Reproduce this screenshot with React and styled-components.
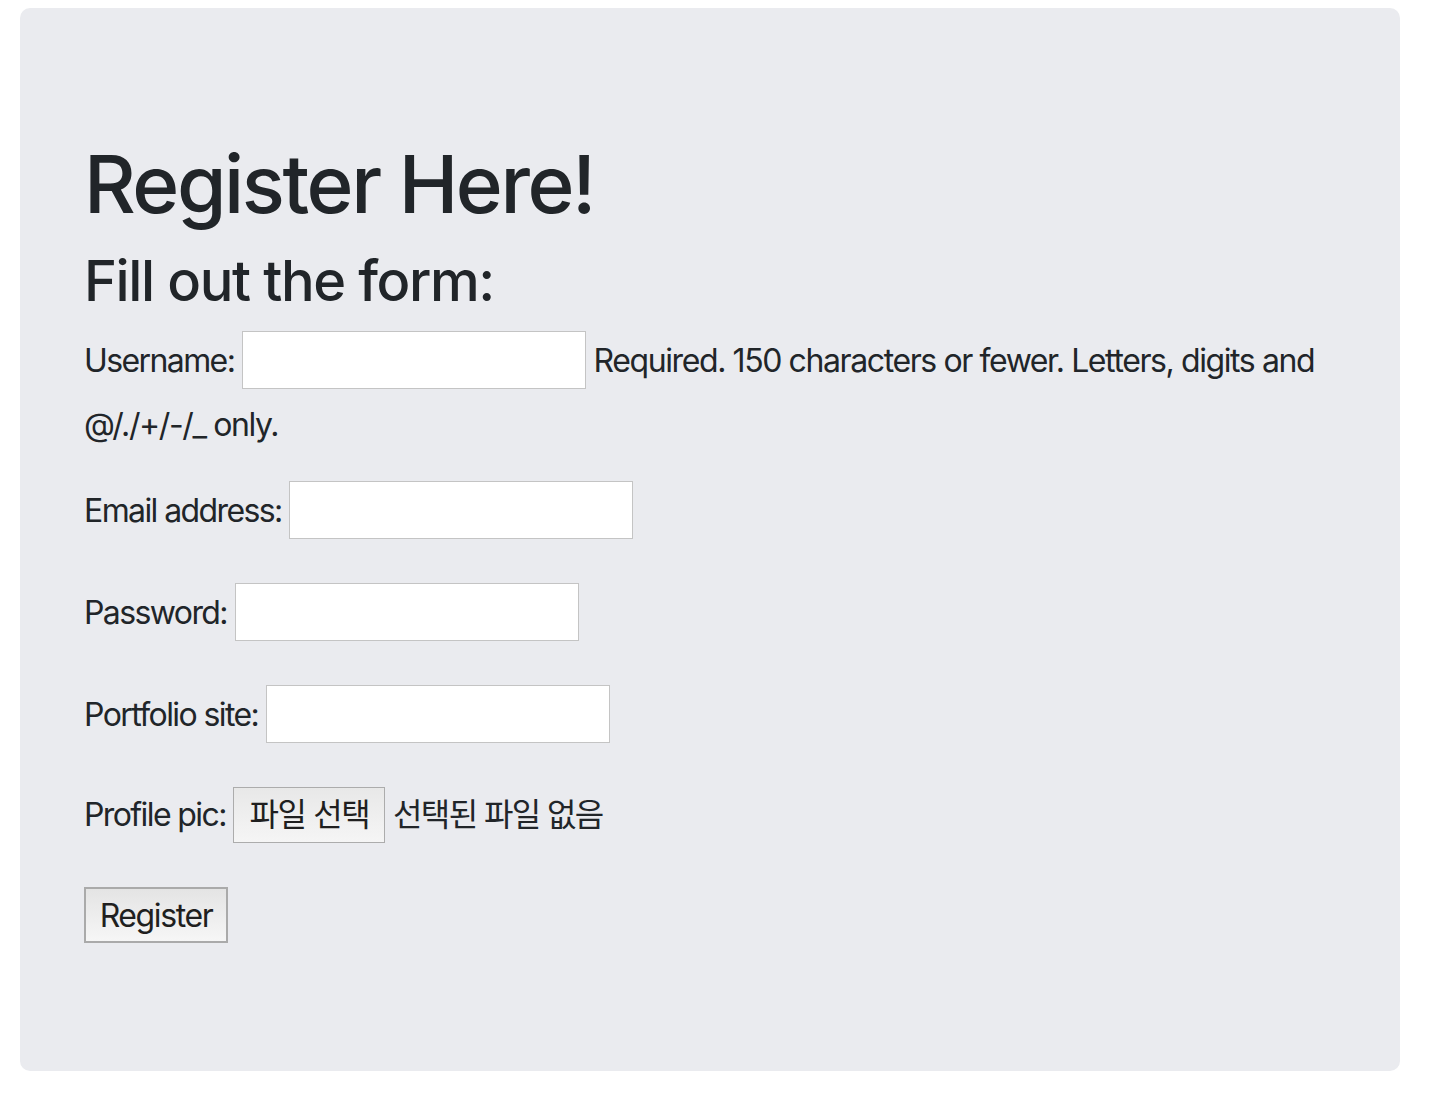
import React from "react";
import styled, { createGlobalStyle } from "styled-components";

const GlobalStyle = createGlobalStyle`
  html, body {
    margin: 0;
    padding: 0;
    background: #ffffff;
  }
  body {
    font-family: Inter, "Noto Sans CJK KR", "Liberation Sans", sans-serif;
    font-size: 32px;
    line-height: 1.5;
    letter-spacing: -1.4px;
    color: #212529;
  }
  *, *::before, *::after { box-sizing: border-box; }
`;

const Page = styled.div`
  padding: 8px 38px 0 20px;
`;

const Jumbotron = styled.section`
  background: #eaebef;
  border-radius: 10px;
  padding: 128px 64px;
  margin-bottom: 64px;
`;

const Title = styled.h1`
  margin: 0 0 16px;
  font-size: 80px;
  font-weight: 500;
  line-height: 1.2;
  letter-spacing: -2.4px;
`;

const Subtitle = styled.h3`
  margin: 0 0 16px;
  font-size: 56px;
  font-weight: 500;
  line-height: 1.2;
  letter-spacing: -1.4px;
`;

const Form = styled.form`
  margin: 0;
  line-height: 48px;
`;

const Field = styled.p`
  margin: 0 0 32px;
  line-height: 48px;
`;

const Label = styled.label`
  letter-spacing: -1.6px;
`;

const TextInput = styled.input`
  display: inline-block;
  width: 344px;
  height: 58px;
  margin: 0 0 12px;
  padding: 1px 4px;
  border: 1px solid #c4c4c4;
  background: #ffffff;
  font-family: inherit;
  font-size: 32px;
  line-height: normal;
  color: #212529;
  vertical-align: baseline;
  outline: none;
`;

const FileButton = styled.button`
  display: inline-block;
  width: 152px;
  height: 56px;
  margin: 0 0 12px;
  padding: 0;
  border: 1.5px solid #acacac;
  border-radius: 0;
  background: linear-gradient(#e8e8e8, #f5f5f5);
  font-family: inherit;
  font-size: 32px;
  line-height: 38px;
  letter-spacing: -1.4px;
  color: #1f1f1f;
  vertical-align: baseline;
  cursor: pointer;
`;

const FileStatus = styled.span`
  letter-spacing: -1.6px;
`;

const SubmitButton = styled.button`
  display: inline-block;
  width: 144px;
  height: 56px;
  margin: 0;
  padding: 0;
  border: 2px solid #aaaaaa;
  border-radius: 0;
  background: linear-gradient(#e4e4e4, #f6f6f6);
  font-family: inherit;
  font-size: 32px;
  line-height: normal;
  letter-spacing: -1.4px;
  color: #1f1f1f;
  vertical-align: baseline;
  cursor: pointer;
`;

const Help = styled.span``;

export default function App() {
  return (
    <>
      <GlobalStyle />
      <Page>
        <Jumbotron>
          <Title>Register Here!</Title>
          <Subtitle>Fill out the form:</Subtitle>
          <Form onSubmit={(e) => e.preventDefault()}>
            <Field>
              <Label htmlFor="id_username">Username:</Label>{" "}
              <TextInput type="text" id="id_username" />{" "}
              <Help>Required. 150 characters or fewer. Letters, digits and @/./+/-/_ only.</Help>
            </Field>
            <Field>
              <Label htmlFor="id_email">Email address:</Label>{" "}
              <TextInput type="email" id="id_email" />
            </Field>
            <Field>
              <Label htmlFor="id_password">Password:</Label>{" "}
              <TextInput type="password" id="id_password" />
            </Field>
            <Field>
              <Label htmlFor="id_portfolio">Portfolio site:</Label>{" "}
              <TextInput type="url" id="id_portfolio" />
            </Field>
            <Field>
              <Label>Profile pic:</Label>{" "}
              <FileButton type="button">파일 선택</FileButton>{" "}
              <FileStatus>선택된 파일 없음</FileStatus>
            </Field>
            <SubmitButton type="submit">Register</SubmitButton>
          </Form>
        </Jumbotron>
      </Page>
    </>
  );
}
